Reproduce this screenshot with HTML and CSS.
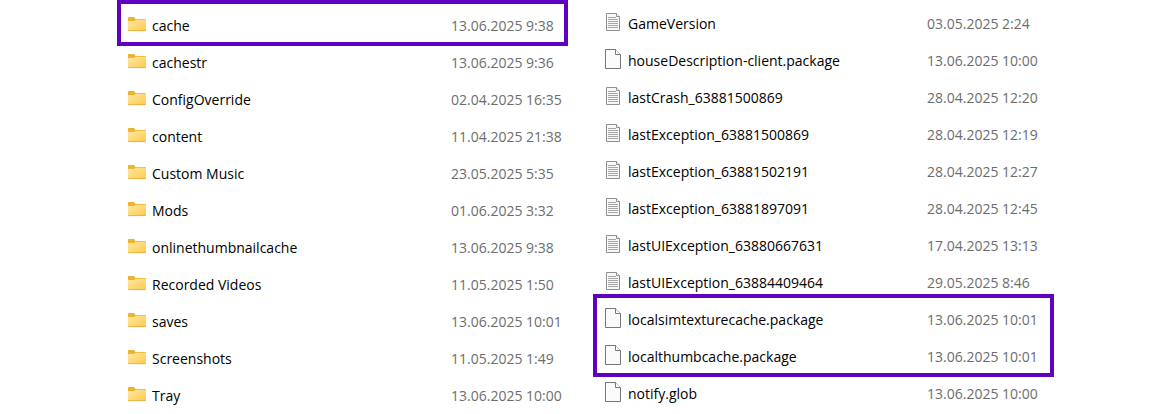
FILE: index.html
```
<!doctype html>
<html lang="en">
<head>
<meta charset="utf-8">
<title>Files</title>
<link rel="stylesheet" href="styles.css">
</head>

<body>
<svg class="sprite" aria-hidden="true">
	<defs>
		<linearGradient id="front" x1="0" y1="0" x2="1" y2="1">
			<stop offset="0" stop-color="#ffe7a2"/>
			<stop offset="1" stop-color="#fccb4c"/>
		</linearGradient>
	</defs>
	<symbol id="folder" viewBox="0 0 18 20">
		<path d="M0 3.8q0-.8.8-.8h5.4l1.3 2h9.7q.8 0 .8.8V12H0z" fill="#edb52f"/>
		<path d="M0 7h6.2l1.5-1.2H18V16.2q0 .8-.8.8H.8q-.8 0-.8-.8z" fill="url(#front)"/>
		<path d="M.3 16.6h17.4" stroke="#e0a93c" stroke-width=".8"/>
	</symbol>
	<symbol id="text" viewBox="0 0 18 20">
		<path d="M2.5 1.5h10l3 3v14h-13z" fill="#f8f8f8" stroke="#8f8f8f"/>
		<path d="M12.5 1.5v3h3" fill="#fff" stroke="#8f8f8f"/>
		<path d="M4 5.5h8M4 7.5h10M4 9.5h10M4 11.5h10M4 13.5h10M4 15.5h10" stroke="#a6a6a6"/>
	</symbol>
	<symbol id="blank" viewBox="0 0 18 20">
		<path d="M1.5.5h10l5 5v14h-15z" fill="#fafafa" stroke="#777"/>
		<path d="M11.5.5v5h5" fill="#fff" stroke="#777"/>
	</symbol>
</svg>

<div class="files">
<table class="list folders">
	<tbody class="marked">
		<tr><td class="name"><svg><use href="#folder"/></svg>cache</td><td class="date">13.06.2025 9:38</td></tr>
	</tbody>
	<tbody>
		<tr><td class="name"><svg><use href="#folder"/></svg>cachestr</td><td class="date">13.06.2025 9:36</td></tr>
		<tr><td class="name"><svg><use href="#folder"/></svg>ConfigOverride</td><td class="date">02.04.2025 16:35</td></tr>
		<tr><td class="name"><svg><use href="#folder"/></svg>content</td><td class="date">11.04.2025 21:38</td></tr>
		<tr><td class="name"><svg><use href="#folder"/></svg>Custom Music</td><td class="date">23.05.2025 5:35</td></tr>
		<tr><td class="name"><svg><use href="#folder"/></svg>Mods</td><td class="date">01.06.2025 3:32</td></tr>
		<tr><td class="name"><svg><use href="#folder"/></svg>onlinethumbnailcache</td><td class="date">13.06.2025 9:38</td></tr>
		<tr><td class="name"><svg><use href="#folder"/></svg>Recorded Videos</td><td class="date">11.05.2025 1:50</td></tr>
		<tr><td class="name"><svg><use href="#folder"/></svg>saves</td><td class="date">13.06.2025 10:01</td></tr>
		<tr><td class="name"><svg><use href="#folder"/></svg>Screenshots</td><td class="date">11.05.2025 1:49</td></tr>
		<tr><td class="name"><svg><use href="#folder"/></svg>Tray</td><td class="date">13.06.2025 10:00</td></tr>
	</tbody>
</table>

<table class="list">
	<tbody>
		<tr><td class="name"><svg><use href="#text"/></svg>GameVersion</td><td class="date">03.05.2025 2:24</td></tr>
		<tr><td class="name"><svg><use href="#blank"/></svg>houseDescription-client.package</td><td class="date">13.06.2025 10:00</td></tr>
		<tr><td class="name"><svg><use href="#text"/></svg>lastCrash_63881500869</td><td class="date">28.04.2025 12:20</td></tr>
		<tr><td class="name"><svg><use href="#text"/></svg>lastException_63881500869</td><td class="date">28.04.2025 12:19</td></tr>
		<tr><td class="name"><svg><use href="#text"/></svg>lastException_63881502191</td><td class="date">28.04.2025 12:27</td></tr>
		<tr><td class="name"><svg><use href="#text"/></svg>lastException_63881897091</td><td class="date">28.04.2025 12:45</td></tr>
		<tr><td class="name"><svg><use href="#text"/></svg>lastUIException_63880667631</td><td class="date">17.04.2025 13:13</td></tr>
		<tr><td class="name"><svg><use href="#text"/></svg>lastUIException_63884409464</td><td class="date">29.05.2025 8:46</td></tr>
	</tbody>
	<tbody class="marked">
		<tr><td class="name"><svg><use href="#blank"/></svg>localsimtexturecache.package</td><td class="date">13.06.2025 10:01</td></tr>
		<tr><td class="name"><svg><use href="#blank"/></svg>localthumbcache.package</td><td class="date">13.06.2025 10:01</td></tr>
	</tbody>
	<tbody>
		<tr><td class="name"><svg><use href="#blank"/></svg>notify.glob</td><td class="date">13.06.2025 10:00</td></tr>
	</tbody>
</table>
</div>
</body>
</html>
```

FILE: styles.css
```
body{
	margin:0;
	background-color:#fff;
	font-family:"Open Sans","Segoe UI",sans-serif;
	font-size:14px;
	line-height:20px;
	color:#000;
}
.sprite{
	display:block;
	width:0;
	height:0;
}
.files{
	display:grid;
	grid-template-columns:44fr 45fr;
	gap:36px;
	align-items:start;
	padding:6px 105px 0 128px;
}
.list{
	width:100%;
	table-layout:fixed;
	border-collapse:collapse;
}
.folders{
	margin-top:2px;
}
.list td{
	height:37px;
	padding:0;
	white-space:nowrap;
}
.name svg{
	width:18px;
	height:20px;
	margin:0 6px 6px 0;
	vertical-align:middle;
}
.list .date{
	width:127px;
	padding-bottom:2px;
	height:35px;
	color:#6d6d6d;
}
.folders .date{
	width:117px;
}

/* purple frame around the highlighted rows */
.marked{
	position:relative;
}
.marked::after{
	content:"";
	position:absolute;
	top:-8px;
	right:0;
	bottom:-1px;
	left:-11px;
	border:4px solid #6000c0;
	pointer-events:none;
}
```
